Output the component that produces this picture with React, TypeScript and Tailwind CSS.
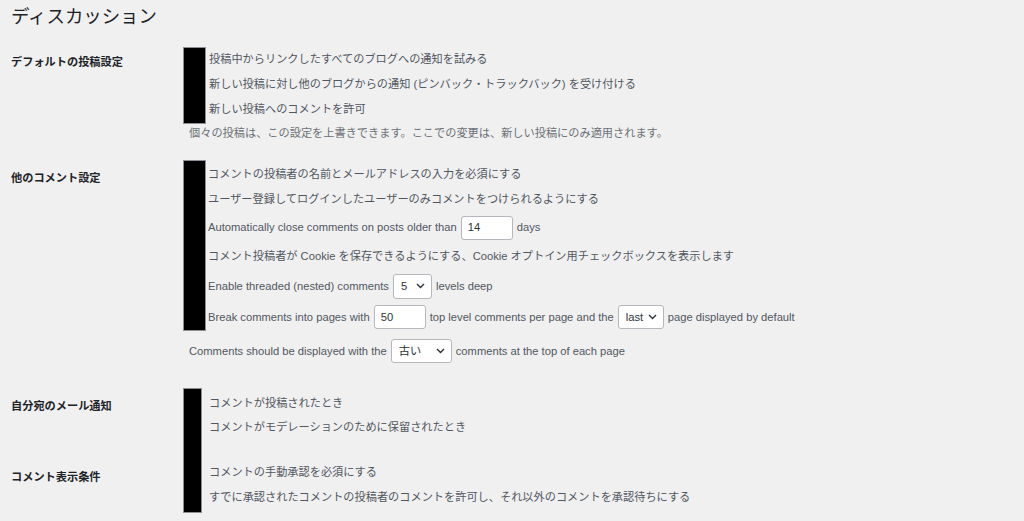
import { ReactNode } from "react";

const FONT = {
  fontFamily: '"Liberation Sans", "Noto Sans CJK JP", sans-serif',
};

function Chevron() {
  return (
    <svg width="9" height="6" viewBox="0 0 9 6" className="shrink-0">
      <polyline
        points="1,1 4.5,4.5 8,1"
        fill="none"
        stroke="#2c3338"
        strokeWidth="1.4"
      />
    </svg>
  );
}

function TextBox({ value, w }: { value: string; w: string }) {
  return (
    <span
      className={`mx-[4px] inline-flex h-[24px] items-center rounded-[3px] border border-[#b4b7bb] bg-white pl-[6px] text-[#2c3338] ${w}`}
    >
      {value}
    </span>
  );
}

function SelectBox({ value, w }: { value: string; w: string }) {
  return (
    <span
      className={`mx-[4px] inline-flex h-[24px] items-center justify-between rounded-[3px] border border-[#b4b7bb] bg-white pl-[7px] pr-[6px] text-[#2c3338] ${w}`}
    >
      {value}
      <Chevron />
    </span>
  );
}

function Row({ h = "h-[25px]", children }: { h?: string; children: ReactNode }) {
  return <div className={`flex items-center ${h}`}>{children}</div>;
}

function Label({ children, pt = "pt-[4px]" }: { children: ReactNode; pt?: string }) {
  return (
    <div className={`w-[172px] shrink-0 ${pt}`}>
      <div className="flex h-[25px] items-center font-bold text-[#1d2327]">{children}</div>
    </div>
  );
}

function Redacted({ w = "w-[23px]" }: { w?: string }) {
  return <div className={`${w} shrink-0 self-stretch border border-[#8c8f94] bg-black`} />;
}

export default function App() {
  return (
    <div
      className="min-h-[521px] w-[1024px] bg-[#f0f0f1] pl-[11px] text-[11.2px] text-[#50575e]"
      style={FONT}
    >
      <h1 className="pt-[4px] text-[18.4px] font-normal leading-[26px] text-[#1d2327]">
        ディスカッション
      </h1>

      {/* デフォルトの投稿設定 */}
      <section className="mt-[17px] flex">
        <Label pt="pt-[3px]">デフォルトの投稿設定</Label>
        <div className="flex flex-col">
          <div className="flex">
            <Redacted />
            <div className="flex flex-col pb-[2px] pl-[3px]">
              <Row>投稿中からリンクしたすべてのブログへの通知を試みる</Row>
              <Row>新しい投稿に対し他のブログからの通知 (ピンバック・トラックバック) を受け付ける</Row>
              <Row>新しい投稿へのコメントを許可</Row>
            </div>
          </div>
          <div className="ml-[6px] flex h-[18px] items-center text-[#6b7075]">
            個々の投稿は、この設定を上書きできます。ここでの変更は、新しい投稿にのみ適用されます。
          </div>
        </div>
      </section>

      {/* 他のコメント設定 */}
      <section className="mt-[18px] flex">
        <Label pt="pt-[6px]">他のコメント設定</Label>
        <div className="flex flex-col">
          <div className="flex">
            <Redacted />
            <div className="flex flex-col pl-[2px] pt-[2px]">
              <Row>コメントの投稿者の名前とメールアドレスの入力を必須にする</Row>
              <Row>ユーザー登録してログインしたユーザーのみコメントをつけられるようにする</Row>
              <Row h="h-[31px]">
                Automatically close comments on posts older than
                <TextBox value="14" w="w-[52px]" />
                days
              </Row>
              <Row h="h-[26px]">
                コメント投稿者が Cookie を保存できるようにする、Cookie オプトイン用チェックボックスを表示します
              </Row>
              <Row h="h-[34px]">
                Enable threaded (nested) comments
                <SelectBox value="5" w="w-[39px] h-[25px]" />
                levels deep
              </Row>
              <Row h="h-[28px]">
                Break comments into pages with
                <TextBox value="50" w="w-[52px]" />
                top level comments per page and the
                <SelectBox value="last" w="w-[46px] h-[23px]" />
                page displayed by default
              </Row>
            </div>
          </div>
          <div className="ml-[6px] mt-[3px] flex h-[34px] items-center">
            Comments should be displayed with the
            <SelectBox value="古い" w="w-[61px]" />
            comments at the top of each page
          </div>
        </div>
      </section>

      {/* 自分宛のメール通知 / コメント表示条件 */}
      <section className="mt-[20px] grid grid-cols-[172px_19px_1fr] grid-rows-[27px_25px_20px_25px_25px_3px]">
        <div className="col-start-1 row-start-1 row-span-3 pt-[6px]">
          <div className="flex h-[25px] items-center font-bold text-[#1d2327]">自分宛のメール通知</div>
        </div>
        <div className="col-start-2 row-start-1 row-span-6 border border-[#8c8f94] bg-black" />
        <div className="col-start-3 row-start-1 flex items-end pb-[3px] pl-[7px]">
          コメントが投稿されたとき
        </div>
        <div className="col-start-3 row-start-2 flex items-center pl-[7px]">
          コメントがモデレーションのために保留されたとき
        </div>
        <div className="col-start-1 row-start-4 row-span-3 pt-[5px]">
          <div className="flex h-[25px] items-center font-bold text-[#1d2327]">コメント表示条件</div>
        </div>
        <div className="col-start-3 row-start-4 flex items-center pl-[7px]">コメントの手動承認を必須にする</div>
        <div className="col-start-3 row-start-5 flex items-center pl-[7px]">
          すでに承認されたコメントの投稿者のコメントを許可し、それ以外のコメントを承認待ちにする
        </div>
      </section>
    </div>
  );
}
